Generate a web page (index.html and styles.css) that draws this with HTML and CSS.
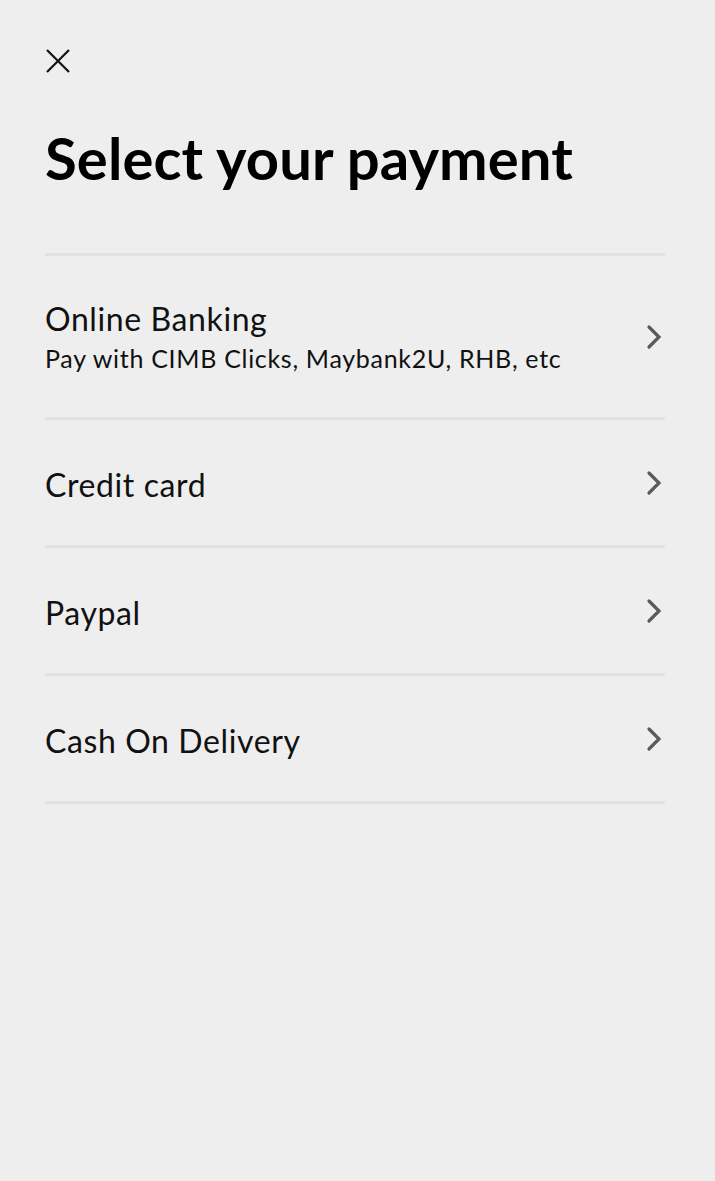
FILE: index.html
```html
<!DOCTYPE html>
<html>
<head>
<meta charset="utf-8">
<link rel="stylesheet" href="styles.css">
</head>
<body>
<div class="page">
  <button class="close" aria-label="Close">
    <svg width="26" height="26" viewBox="0 0 26 26"><path d="M2 2 L24 24 M24 2 L2 24" stroke="#111" stroke-width="2.2" fill="none"/></svg>
  </button>
  <h1 class="title">Select your payment</h1>
  <ul class="list">
    <li class="item item-tall">
      <div class="texts">
        <div class="name">Online Banking</div>
        <div class="sub">Pay with CIMB Clicks, Maybank2U, RHB, etc</div>
      </div>
      <svg class="chev" width="16" height="26" viewBox="0 0 16 26"><path d="M3 3 L13 13 L3 23" stroke="#5a5a5a" stroke-width="3.2" fill="none" stroke-linecap="round"/></svg>
    </li>
    <li class="item">
      <div class="texts"><div class="name">Credit card</div></div>
      <svg class="chev" width="16" height="26" viewBox="0 0 16 26"><path d="M3 3 L13 13 L3 23" stroke="#5a5a5a" stroke-width="3.2" fill="none" stroke-linecap="round"/></svg>
    </li>
    <li class="item">
      <div class="texts"><div class="name">Paypal</div></div>
      <svg class="chev" width="16" height="26" viewBox="0 0 16 26"><path d="M3 3 L13 13 L3 23" stroke="#5a5a5a" stroke-width="3.2" fill="none" stroke-linecap="round"/></svg>
    </li>
    <li class="item">
      <div class="texts"><div class="name">Cash On Delivery</div></div>
      <svg class="chev" width="16" height="26" viewBox="0 0 16 26"><path d="M3 3 L13 13 L3 23" stroke="#5a5a5a" stroke-width="3.2" fill="none" stroke-linecap="round"/></svg>
    </li>
  </ul>
</div>
</body>
</html>
```
FILE: styles.css
```css
html, body {
  margin: 0;
  padding: 0;
  background: #eeeeee;
}
body {
  font-family: Lato, "Noto Sans", sans-serif;
  color: #111;
  min-height: 1181px;
}
.page {
  padding: 48px 50px 0 45px;
}
.close {
  display: block;
  background: none;
  border: 0;
  padding: 0;
  margin: 0;
  width: 26px;
  height: 26px;
  cursor: pointer;
}
.title {
  margin: 44px 0 0 0;
  font-size: 58px;
  font-weight: 700;
  line-height: 80px;
  letter-spacing: 0.1px;
  color: #000;
}
.list {
  list-style: none;
  margin: 55px 0 0 0;
  padding: 0;
  border-bottom: 3px solid #e2e2e2;
}
.item {
  display: flex;
  align-items: center;
  justify-content: space-between;
  border-top: 3px solid #e2e2e2;
  height: 125px;
  box-sizing: content-box;
}
.item .texts {
  padding-top: 5px;
}
.item-tall {
  height: 161px;
}
.item-tall .texts {
  padding-top: 2px;
}
.name {
  font-size: 32px;
  line-height: 40px;
  letter-spacing: 0.6px;
  color: #111;
}
.sub {
  font-size: 25px;
  line-height: 36px;
  letter-spacing: 0.7px;
  margin-top: 1px;
  color: #111;
}
.chev {
  margin-right: 3px;
  flex: none;
}
```
